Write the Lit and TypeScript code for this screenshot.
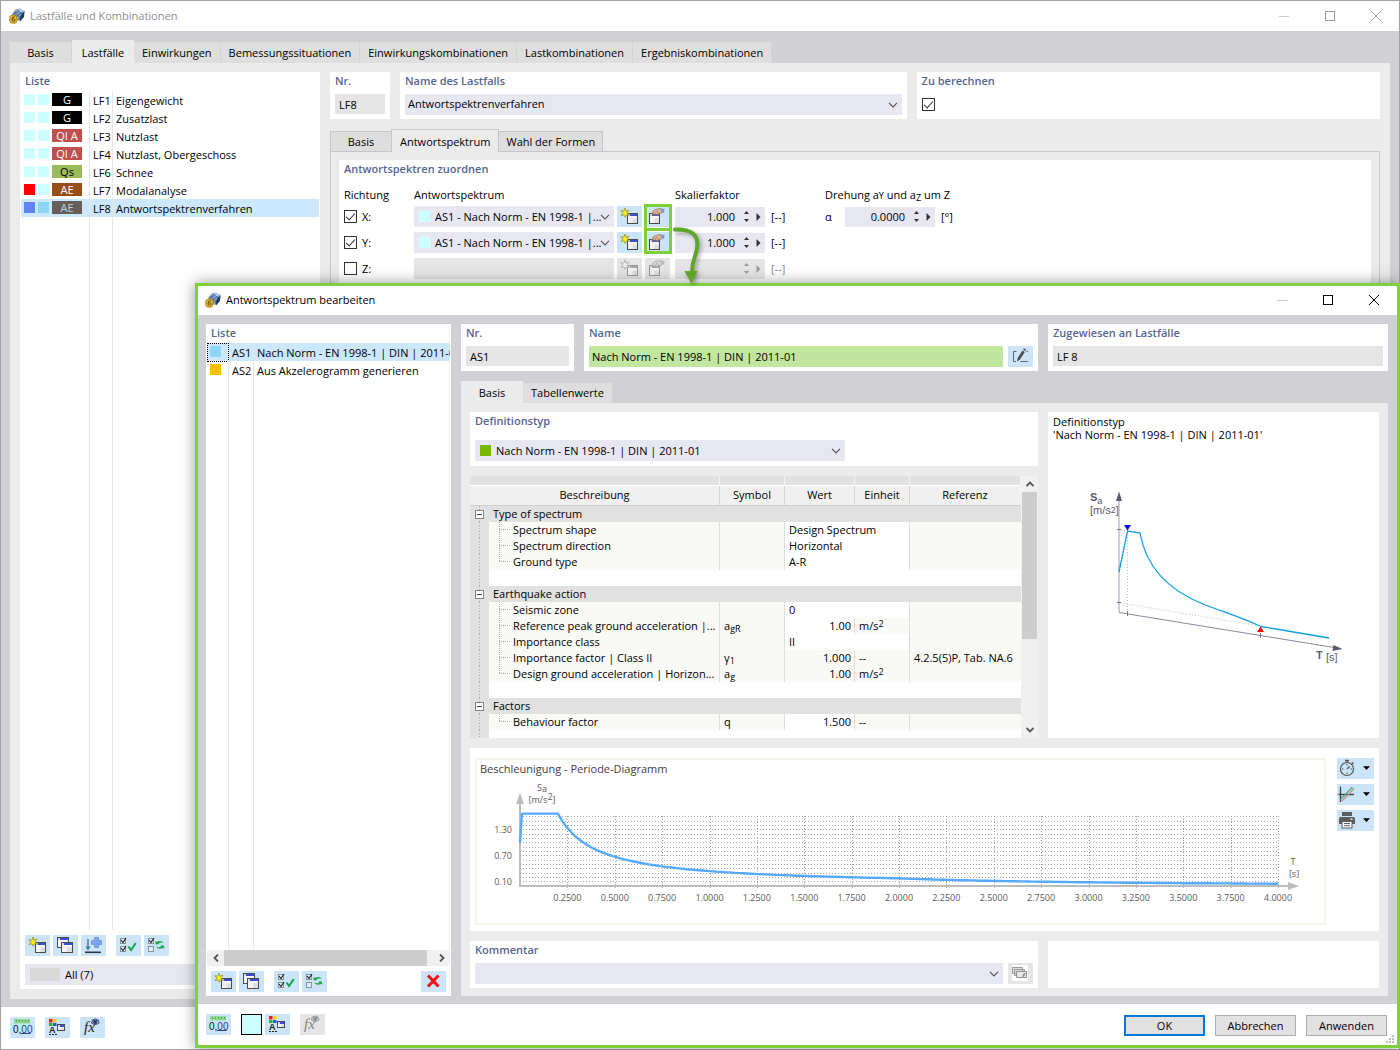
import { LitElement, html, css, svg, nothing, TemplateResult } from "lit";
import { customElement, property } from "lit/decorators.js";
import { classMap } from "lit/directives/class-map.js";

/* ---------- toolbar glyphs, drawn on a 25 x 21 button face ---------- */

const miniWindow = (x: number, y: number, w: number, h: number, bar = "#3a4fd8", frame = "#4a4a4a") => svg`
  <rect x=${x + 0.5} y=${y + 0.5} width=${w - 1} height=${h - 1} fill="#f3f3f3" stroke=${frame}></rect>
  <rect x=${x + 1} y=${y + 1} width=${w - 2} height="2" fill=${bar}></rect>
  <rect x=${x + 1} y=${y + 1} width="2" height="2" fill="#d8d8d8"></rect>
  <rect x=${x + w / 2} y=${y + h / 2} width=${w / 2 - 1} height=${h / 2 - 1} fill="#dedede"></rect>`;

const star = (fill: string, stroke: string) => svg`
  <path d="M8 2 L9 5.2 L12 4.2 L10 6.7 L12.4 9 L9.4 8.6 L8.2 11.4 L7 8.8 L4 9.6 L6 7 L3.6 4.8 L6.8 5.2 Z"
    fill=${fill} stroke=${stroke} stroke-width="0.7"></path>`;

const tick = (y: number) => svg`
  <rect x="4.5" y=${y + 0.5} width="5" height="5" fill="#e6eef5" stroke="#8a949c"></rect>
  <path d=${`M5 ${y + 2} L7 ${y + 4.5} L10 ${y}`} fill="none" stroke="#222" stroke-width="1.2"></path>`;

const eye = (dark: string, light: string) => svg`
  <path d="M11 5.5 Q15 1 19.5 5.5 Q15 9.5 11 5.5 Z" fill=${light} stroke=${dark} stroke-width="0.9"></path>
  <circle cx="15.2" cy="5.3" r="1.8" fill=${dark}></circle>
  <path d="M11.5 3.5 Q15 0.5 19 3.5" fill="none" stroke=${dark} stroke-width="0.9"></path>`;

const hand = (skin: string, line: string, cuff: string) => svg`
  <path d="M6.5 8 L8 5 Q10 3 12.5 3 L16 2.5 L17 6.5 Q15.5 8.2 13.5 7.6 L12.5 9 L11 8 L9.5 8.6 L8.5 7.6 Z" fill=${skin} stroke=${line} stroke-width="0.6"></path>
  <path d="M9 6 L11.5 8 M11 5 L13.5 7" stroke=${line} stroke-width="0.6"></path>
  <path d="M16 2.5 L19.8 3 L19 5 L19.5 7 L16.8 6.5 Z" fill=${cuff}></path>`;

const glyphs: Record<string, TemplateResult> = {
  new: svg`${miniWindow(10, 7, 11, 11)}${star("#f7ef1e", "#8d8a2a")}`,
  newOff: svg`${miniWindow(10, 7, 11, 11, "#a9a9a9", "#979797")}${star("#ededed", "#a5a5a5")}`,
  copy: svg`${miniWindow(4, 2, 12, 11)}${miniWindow(8, 7, 12, 11)}`,
  importCase: svg`
    <path d="M13.5 2.5 h4 v3 h3 v4 h-3 v3 h-4 v-3 h-3 v-4 h3 z" fill="#7fa3ee" stroke="#6c8fd8" stroke-width="0.8"></path>
    <path d="M7 4 V13" stroke="#3f76a8" stroke-width="1.4"></path><path d="M4.5 11.5 L7 15.5 L9.5 11.5 Z" fill="#3f76a8"></path>
    <path d="M4 17.3 H20" stroke="#2e3a44" stroke-width="1.6"></path>`,
  checkAll: svg`${tick(3)}${tick(11)}
    <path d="M12.5 11.5 L15 15 L19.8 8" fill="none" stroke="#16a54b" stroke-width="2"></path>`,
  invert: svg`${tick(3)}<rect x="4.5" y="11.5" width="5" height="5" fill="#e6eef5" stroke="#8a949c"></rect>
    <path d="M11 6.5 L12 9.5 L15.5 9 L14.5 8 Q17 6.8 19.5 8 Q17.5 4.8 13 6.8 Z" fill="#16a54b"></path>
    <path d="M20.5 13.5 L19.5 10.2 L16 10.8 L17.2 11.8 Q15 13 12 11.5 Q14.5 15 18.8 13 Z" fill="#16a54b"></path>`,
  remove: svg`<path d="M7 4.5 L17.5 15.5 M17.5 4.5 L7 15.5" stroke="#fb0d0d" stroke-width="3"></path>`,
  units: svg`<rect x="4" y="2" width="16" height="4.5" fill="#8fd98f"></rect>
    <path d="M6.5 3v2 M9.5 3v2 M12.5 3v2 M15.5 3v2 M18.5 3v2" stroke="#58a566"></path>
    <text x="3" y="15.5" class="digits" fill="#111">0,<tspan fill="#26428b">00</tspan></text>
    <path d="M11 16.5 H20.5" stroke="#26428b"></path>`,
  display: svg`<rect x="4" y="2" width="3.5" height="3.5" fill="#ee1c1c"></rect><rect x="8" y="2" width="3.5" height="3.5" fill="#f3d516"></rect>
    <rect x="4" y="6" width="3.5" height="3" fill="#35b335"></rect><rect x="8" y="6" width="3.5" height="3" fill="#2f55e6"></rect>
    <text x="4" y="16" class="letter" fill="#222">A</text>
    <path d="M4 17.5 H12" stroke="#222" stroke-dasharray="2 1"></path>
    ${miniWindow(12, 7, 8, 7)}`,
  formula: svg`<text x="4" y="14.5" class="fx" fill="#222">fx</text>${eye("#2b3766", "#aab4d8")}`,
  formulaOff: svg`<text x="4" y="14.5" class="fx" fill="#858585">fx</text>${eye("#8c8c8c", "#d5d5d5")}`,
  edit: svg`<path d="M8.5 5.5 H5.5 V15.5 H8 M12.5 15.5 H20 M18.5 5.5 H20" fill="none" stroke="#5c6a74"></path>
    <path d="M9 15.5 L9.7 12 L14.5 4.5 L16.8 6 L12 13.6 Z" fill="#4d4d4d"></path>
    <path d="M15.2 3.5 L16 2.3 L18.2 3.7 L17.4 5 Z" fill="#4d4d4d"></path>`,
  pick: svg`${miniWindow(4, 7, 11, 11, "#5b5fb0")}${hand("#dcb594", "#8d6a4e", "#6c9cd0")}`,
  pickOff: svg`${miniWindow(4, 7, 11, 11, "#a9a9a9", "#979797")}${hand("#d4d4d4", "#9a9a9a", "#bdbdbd")}`,
  stack: svg`<rect x="4" y="2" width="16" height="16" fill="#fff"></rect>
    <path d="M4.5 4.5 h10 v6 h-10 z M6.5 6.5 h10 v6 h-10 z" fill="#dcdcdc" stroke="#9a9a9a"></path>
    <path d="M8.5 8.5 h10 v6 h-10 z" fill="#e8e8e8" stroke="#909090"></path>
    <path d="M14 13.5 L16 9.5 L18 11 L15.5 14 Z" fill="#9c9c9c"></path>`,
  stopwatch: svg`<circle cx="10" cy="11" r="6.5" fill="none" stroke="#555" stroke-width="1.2"></circle>
    <path d="M10 2 V4.5 M8 2.5 H12 M15 4.5 L16.5 6 M10 11 L12.5 8.5" stroke="#555" stroke-width="1.4"></path>
    <path d="M10 6v1.5 M10 14.5v1.5 M5 11h1.5 M13.5 11h1.5" stroke="#555"></path>`,
  axes: svg`<path d="M3.5 2.5 V18 M1.5 10.5 H17" stroke="#444" stroke-width="1.3"></path>
    <path d="M4 15 L15.5 3" stroke="#3fae86" stroke-width="1.2"></path><path d="M5 17 L17 4.5" stroke="#c98d84" stroke-width="1.2"></path>`,
  printer: svg`<rect x="5" y="2" width="10" height="4" fill="#5d5d5d"></rect>
    <path d="M3.5 7 h13 q1.5 0 1.5 1.5 v5.5 h-16 v-5.5 q0 -1.5 1.5 -1.5 z" fill="#5d5d5d"></path>
    <rect x="13.5" y="8.5" width="2" height="1.3" fill="#fff"></rect>
    <rect x="5" y="11.5" width="10" height="6.5" fill="#fff" stroke="#5d5d5d"></rect>
    <path d="M7 13.5 H13 M7 15.7 H13" stroke="#5d5d5d"></path>`,
};

@customElement("tool-button")
class ToolButton extends LitElement {
  @property() glyph = "";
  @property() label = "";
  @property({ type: Boolean }) disabled = false;
  @property({ type: Boolean }) menu = false;

  static styles = css`
    :host { display: block; flex: none; }
    button { display: flex; align-items: center; border: 0; padding: 0; height: 21px; background: #cbe4f7; }
    button:disabled { background: #e5e5e5; }
    svg { display: block; }
    .digits { font: 10px "Liberation Sans", sans-serif; }
    .letter { font: bold 9px "Liberation Sans", sans-serif; }
    .fx { font: italic 15px "Liberation Serif", serif; }
  `;
  render() {
    return html`<button ?disabled=${this.disabled} aria-label=${this.label} title=${this.label}>
      <svg width="25" height="21" viewBox="0 0 25 21">${glyphs[this.glyph]}</svg>
      ${this.menu ? html`<svg width="12" height="21" viewBox="0 0 12 21"><path d="M1 8.2 H8 L4.5 12 Z"></path></svg>` : nothing}
    </button>`;
  }
}

/* ---------- acceleration / period diagram ---------- */

@customElement("spectrum-chart")
class SpectrumChart extends LitElement {
  static styles = css`
    :host { display: block; }
    svg { display: block; width: 100%; }
    text { font: 9px "Open Sans", "Noto Sans", sans-serif; fill: #5a5a5a; text-anchor: middle; }
    .title { font-size: 11px; fill: #404040; text-anchor: start; }
    .end { text-anchor: end; }
  `;
  render() {
    const x = (t: number) => 43 + t * 189.5;
    const y = (a: number) => 125.5 - a * 43.3;
    const top = 1.66;
    const points: string[] = [`${x(0)},83`, `${x(0.01)},${y(top)}`, `${x(0.2)},${y(top)}`];
    for (let t = 0.22; t <= 4.001; t += 0.02) {
      const a = t < 2 ? (top * 0.2) / t : (top * 0.4) / (t * t);
      points.push(`${x(t).toFixed(1)},${y(a).toFixed(1)}`);
    }
    const rows = Array.from({ length: 16 }, (_, i) => Math.round(y(0.1 * (i + 1))) + 0.5);
    const cols = Array.from({ length: 16 }, (_, i) => (i + 1) * 0.25);
    return html`<svg viewBox="0 0 847 163" role="img" aria-label="Beschleunigung - Periode-Diagramm">
      <text class="title" x="3" y="13">Beschleunigung - Periode-Diagramm</text>
      ${rows.map((r) => svg`<path d=${`M43 ${r} H801`} stroke="#a8a8a8" stroke-dasharray="1 2"></path>`)}
      ${cols.map((c) => svg`<path d=${`M${Math.round(x(c))}.5 56 V127`} stroke="#9c9c9c" stroke-dasharray="1 2"></path>
        <path d=${`M${Math.round(x(c))}.5 124 V128`} stroke="#b0b0b0"></path>
        <text x=${x(c)} y="141">${c.toFixed(4)}</text>`)}
      <path d="M43 38 V126 H812" fill="none" stroke="#bdbdbd" stroke-width="2"></path>
      <path d="M43 33 L47 44 H39 Z M822 126 L811 122 V130 Z" fill="#bdbdbd"></path>
      <polyline points=${points.join(" ")} fill="none" stroke="#55aaff" stroke-width="2.4" stroke-linejoin="round"></polyline>
      ${[0.1, 0.7, 1.3].map((v) => svg`<text class="end" x="35" y=${y(v) + 4}>${v.toFixed(2)}</text>`)}
      <text x="65" y="31">S<tspan dy="1">a</tspan></text>
      <text x="65" y="43">[m/s<tspan dy="-3">2</tspan><tspan dy="3">]</tspan></text>
      <text x="816" y="105">T</text>
      <text x="817" y="117">[s]</text>
    </svg>`;
  }
}

/* ---------- schematic of the definition type ---------- */

@customElement("spectrum-preview")
class SpectrumPreview extends LitElement {
  static styles = css`
    :host { display: block; }
    svg { display: block; width: 100%; }
    text { font: 11px "Liberation Sans", sans-serif; fill: #5c5a6e; }
    .bold { font-weight: bold; }
    .small { font-size: 9px; font-weight: 400; }
  `;
  render() {
    return html`<svg viewBox="0 -4 331 270" role="img" aria-label="Schema des Antwortspektrums">
      <path d="M71 55 V167" stroke="#cfcdd6" stroke-width="2"></path>
      <path d="M69 84.5 H73 M69 157.5 H73" stroke="#77748a"></path>
      <path d="M79.5 86 V168 M73 158 L212 181 M73 85 L80 86" fill="none" stroke="#bcbcc4" stroke-dasharray="1 2"></path>
      <path d="M71 167.5 L286 202.5" fill="none" stroke="#8d8a99"></path>
      <path d="M79.5 166 V171 M212.5 188 V193" stroke="#77748a"></path>
      <path d="M71 46.5 L74 56 H68 Z" fill="#5c5a6e"></path>
      <path d="M294.5 204 L285.5 200 L284.5 206 Z" fill="#5c5a6e"></path>
      <path d="M71 127 L79.5 86 L92 88 C98 122 120 145 155 159 C175 167 190 171 213 181.5 L281 193" fill="none" stroke="#119fe0" stroke-width="1.3"></path>
      <path d="M76 80 H83 L79.5 85.5 Z" fill="#0a0af5"></path>
      <path d="M209 187 H216 L212.5 181.5 Z" fill="#f50a0a"></path>
      <text class="bold" x="42" y="56">S<tspan dy="3" class="small">a</tspan></text>
      <text x="42" y="69">[m/s<tspan dy="-1" class="small">2</tspan><tspan dy="1">]</tspan></text>
      <text class="bold" x="268" y="214">T</text>
      <text x="278" y="216">[s]</text>
    </svg>`;
  }
}

/* ---------- data ---------- */

interface LoadCase { nr: string; name: string; tag: string; bg: string; fg: string; c1: string; c2: string; selected?: boolean }
const loadCases: LoadCase[] = [
  { nr: "LF1", name: "Eigengewicht", tag: "G", bg: "#000", fg: "#fff", c1: "#ccffff", c2: "#ccffff" },
  { nr: "LF2", name: "Zusatzlast", tag: "G", bg: "#000", fg: "#fff", c1: "#ccffff", c2: "#ccffff" },
  { nr: "LF3", name: "Nutzlast", tag: "QI A", bg: "#c0504d", fg: "#fff", c1: "#ccffff", c2: "#ccffff" },
  { nr: "LF4", name: "Nutzlast, Obergeschoss", tag: "QI A", bg: "#c0504d", fg: "#fff", c1: "#ccffff", c2: "#ccffff" },
  { nr: "LF6", name: "Schnee", tag: "Qs", bg: "#9bbb59", fg: "#000", c1: "#ccffff", c2: "#ccffff" },
  { nr: "LF7", name: "Modalanalyse", tag: "AE", bg: "#974f17", fg: "#fff", c1: "#ff0000", c2: "#ccffff" },
  { nr: "LF8", name: "Antwortspektrenverfahren", tag: "AE", bg: "#675f57", fg: "#b5d5ea", c1: "#5f85f5", c2: "#8dd6f7", selected: true },
];

interface Param { name: string; symbol?: TemplateResult; value: string; unit?: TemplateResult | string; ref?: string; editable: boolean }
interface Section { title: string; rows: Param[] }
const ms2 = html`m/s<sup>2</sup>`;
const sections: Section[] = [
  {
    title: "Type of spectrum",
    rows: [
      { name: "Spectrum shape", value: "Design Spectrum", editable: true },
      { name: "Spectrum direction", value: "Horizontal", editable: true },
      { name: "Ground type", value: "A-R", editable: true },
    ],
  },
  {
    title: "Earthquake action",
    rows: [
      { name: "Seismic zone", value: "0", editable: true },
      { name: "Reference peak ground acceleration |...", symbol: html`a<sub>gR</sub>`, value: "1.00", unit: ms2, editable: true },
      { name: "Importance class", value: "II", editable: true },
      { name: "Importance factor | Class II", symbol: html`γ<sub>1</sub>`, value: "1.000", unit: "--", ref: "4.2.5(5)P, Tab. NA.6", editable: false },
      { name: "Design ground acceleration | Horizon...", symbol: html`a<sub>g</sub>`, value: "1.00", unit: ms2, editable: false },
    ],
  },
  { title: "Factors", rows: [{ name: "Behaviour factor", symbol: html`q`, value: "1.500", unit: "--", editable: true }] },
];

const appIcon = html`<svg width="16" height="16" viewBox="0 0 16 16" aria-hidden="true">
  <path d="M3 6 L6.5 1.5 L11 0.5 L15.5 3 L15 8 L11 13 L7 12 Z" fill="#7f9cc4"></path>
  <path d="M6.5 1.5 L11 0.5 L15.5 3 L12.5 5.5 Z" fill="#b4c7e0"></path>
  <path d="M13 5.5 L15.5 3 L15 9 L11 13.5 L10.5 10 Z" fill="#2b3a55"></path>
  <path d="M5 4 L11 9.5 M8 1.5 L13 6 M4 7 L10 2.5 M7 9 L13 4" stroke="#3f5f90" stroke-width="0.8"></path>
  <rect x="0.7" y="7" width="7.3" height="8.3" rx="3" fill="#e5b62c" stroke="#a07c18" stroke-width="0.8"></rect>
  <path d="M6 8.8 Q3 8.2 3 11.5 Q3 13.5 4.6 13.5 Q6 13.3 6 12 Q5.8 10.8 4.5 10.9 Q3.5 11 3.1 11.8" fill="none" stroke="#5f4a0c" stroke-width="0.9"></path>
</svg>`;

const chevron = html`<svg class="chevron" width="10" height="6" viewBox="0 0 10 6" aria-hidden="true">
  <path d="M1 0.8 L5 4.8 L9 0.8" fill="none" stroke="#555" stroke-width="1.2"></path></svg>`;

@customElement("app-root")
class AppRoot extends LitElement {
  static styles = css`
    :host { display: block; }
    * { box-sizing: border-box; }
    .desktop, button, input, select { font: 11px/18px "Open Sans", "Noto Sans", sans-serif; color: #000; }
    .desktop { position: relative; height: 100vh; min-height: 900px; overflow: hidden; }
    button, input, select { margin: 0; border: 0; border-radius: 0; }

    .window { display: flex; flex-direction: column; height: 100%; background: #fff; border: 1px solid #a3a3a3; }
    .dialog { position: absolute; inset: 283px 0 2px 195px; height: auto; border: 3px solid #7fd13b; box-shadow: 0 0 14px rgba(0, 0, 0, 0.4); }
    .titlebar { display: flex; align-items: center; flex: none; height: 30px; padding-left: 8px; gap: 5px; color: #8f8f8f; }
    .dialog .titlebar { height: 29px; padding: 0 0 2px 7px; color: #000; }
    .titlebar h1 { flex: 1; margin: 0; font-size: 11px; font-weight: 400; }
    .window-buttons { display: flex; }
    .window-button { width: 46px; height: 27px; padding: 0; background: none; color: #999; display: grid; place-items: center; }
    .dialog .window-button { color: #000; }
    .window-button:disabled, .dialog .window-button:disabled { color: #ccc; }
    .body { flex: 1; min-height: 0; display: flex; flex-direction: column; background: #d1d0d5; padding: 9px 9px 8px; }
    .dialog .body { flex-direction: row; gap: 10px; padding-left: 8px; }
    .footer { display: flex; flex: none; height: 42px; padding: 10px 9px; gap: 10px; }
    .dialog .footer { height: 41px; padding: 10px 10px 0 8px; position: relative; }

    .tabs { display: flex; align-items: flex-end; flex: none; height: 23px; }
    .tab { height: 21px; padding: 0 8px; background: #dedede; border-right: 1px solid #d3d3d6; }
    .tab.wide { min-width: 62px; }
    .tab.active { height: 23px; padding-top: 2px; background: #ebebeb; border: 0; }
    .tabs.low { height: 22px; margin-top: 10px; }
    .tabs.low .tab { height: 20px; }
    .tabs.low .tab.active { height: 22px; }
    .tabs.boxed .tab { padding: 0 7px; border: 1px solid #c6c5ce; border-bottom: 0; margin-right: -1px; }
    .tabs.boxed .tab.active { height: 23px; padding: 1px 8px 0; margin-bottom: -1px; position: relative; }

    .page { flex: 1; min-height: 0; display: flex; gap: 10px; padding: 9px 10px 10px; background: #ebebeb; }
    .page.boxed { border: 1px solid #c6c5ce; padding: 8px; }
    .page.stack { flex-direction: column; padding: 9px 9px 8px; }
    .column { flex: 1; min-width: 0; display: flex; flex-direction: column; }
    .row { display: flex; gap: 10px; flex: none; }

    .group { background: #fff; padding: 0 5px 4px; min-width: 0; }
    .group h2, .group .caption { display: block; margin: 0 0 4px; font-size: 11px; line-height: 18px; font-weight: 600; color: #566690; }
    .fields { display: flex; gap: 5px; }
    .nr { flex: 0 0 60px; }
    .dialog .nr { flex-basis: 113px; }
    .name { flex: 507 1 0; }
    .calc { flex: 463 1 0; }
    .dialog .name { flex: 1; }
    .side { flex: 0 0 331px; }
    .side.outer { flex-basis: 340px; }
    .grow { flex: 1; }
    .calc-field { padding-top: 4px; }

    .text { display: block; width: 100%; min-width: 0; height: 20px; padding: 0 4px; background: #e5e5e5; }
    .text.marked { height: 21px; padding: 0 3px; background: #c1e6a0; }
    .combo { display: grid; grid-template-columns: 1fr 18px; align-items: center; flex: 1; min-width: 0; height: 21px; background: #e7e7f2; }
    .combo select { grid-area: 1 / 1 / 2 / 3; width: 100%; height: 21px; padding: 0 3px 1px; appearance: none; background: none; outline: 0; }
    .combo .chevron { grid-area: 1 / 2; justify-self: center; pointer-events: none; }
    .combo.swatched { grid-template-columns: 21px 1fr 18px; }
    .combo.swatched select { grid-area: 1 / 2 / 2 / 4; padding: 0; }
    .combo.swatched .chevron { grid-area: 1 / 3; }
    .combo .swatch { margin-left: 5px; }
    .combo.off { background: #e5e5e5; }
    .combo.filter { grid-template-columns: 40px 1fr 18px; flex: none; }
    .combo .filter-mark { width: 30px; height: 13px; background: #d9d9d9; }
    .check { appearance: none; width: 13px; height: 13px; border: 1px solid #333; background: #fff; display: grid; place-items: center; flex: none; }
    .check:checked::after { content: ""; width: 4px; height: 8px; border: solid #333; border-width: 0 1px 1px 0; transform: rotate(42deg); margin-top: -3px; }
    .swatch { width: 11px; height: 11px; flex: none; display: block; }

    .group.list-group { flex: 0 0 300px; display: flex; flex-direction: column; padding: 0; }
    .dialog .group.list-group { flex-basis: 245px; padding-bottom: 4px; }
    .group.list-group h2 { margin: 0; padding: 0 5px 1px; }
    .list { flex: 1; min-height: 0; margin: 0 1px; display: flex; flex-direction: column; overflow: hidden; }
    .list-row { display: grid; grid-template-columns: 69px 23px 1fr; flex: none; height: 18px; white-space: nowrap; }
    .list-row > * { border-right: 1px solid #e6e6e6; padding-left: 3px; line-height: 19px; overflow: hidden; }
    .list-row > :last-child { border: 0; }
    .list-row .marks { display: flex; gap: 3px; padding: 2px 0 0 3px; }
    .list-row .marks .swatch { margin-top: 1px; }
    .list-row .number { overflow: visible; }
    .list-row.selected { background: #cce8ff; }
    .list-row.rest { flex: 1; }
    .dialog .list-row { grid-template-columns: 22px 25px 1fr; }
    .dialog .list-row .marks { padding: 0 0 0 3px; }
    .dialog .list-row.selected .marks { outline: 1px dotted #000; outline-offset: -1px; }
    .dialog .list-row .marks .swatch { margin-top: 3px; }
    .tag { width: 30px; height: 13px; line-height: 13px; text-align: center; }
    .tools { display: flex; gap: 3px; flex: none; padding: 5px 5px 0; }
    .tools .spacer { width: 4px; }
    .tools .push { margin-left: auto; }
    .list-foot { padding: 8px 5px 4px; display: grid; }

    .hscroll { display: flex; flex: none; height: 16px; margin: 1px 1px 0; background: #f0f0f0; align-items: center; }
    .arrow { width: 17px; height: 16px; padding: 0; background: none; display: grid; place-items: center; flex: none; }
    .hscroll .track { flex: 1; display: flex; height: 16px; }
    .hscroll .thumb { flex: 0 0 97%; background: #cdcdcd; }
    .vscroll { display: flex; flex-direction: column; flex: 0 0 17px; background: #f0f0f0; align-items: center; }
    .vscroll .track { flex: 1; width: 15px; display: flex; flex-direction: column; }
    .vscroll .thumb { flex: 0 0 64%; background: #cdcdcd; }

    .assign-head { padding-top: 2px; }
    .assign-rows { display: grid; gap: 5px; margin-top: 1px; }
    .assign-row { display: grid; grid-template-columns: 70px 203px 58px 90px 60px 20px 90px 30px; align-items: center; height: 21px; white-space: nowrap; }
    .assign-row .combo { margin-right: 3px; }
    .pair { display: flex; gap: 3px; }
    .span2 { grid-column: span 2; }
    .span3 { grid-column: span 3; }
    .direction { display: flex; align-items: center; gap: 5px; }
    .spin { display: grid; grid-template-columns: 1fr 15px 15px; align-items: center; height: 20px; background: #e7e7f2; }
    .spin input { width: 100%; min-width: 0; height: 20px; padding: 0; background: none; text-align: right; }
    .spin svg { justify-self: end; }
    .spin .more { justify-self: center; }
    .spin.off { background: #e5e5e5; }
    .unit { padding-left: 6px; }
    .dim { color: #8a8a8a; }
    sub, sup, small { font-size: 9px; line-height: 0; }
    sub { vertical-align: -2px; }
    sup { vertical-align: 3px; }

    .highlight { position: absolute; left: 644px; top: 204px; width: 28px; height: 50px; border: 3px solid #7fd13b; display: grid; }
    .highlight::after { content: ""; height: 3px; align-self: center; background: #7fd13b; }
    .pointer { position: absolute; left: 670px; top: 222px; filter: drop-shadow(2px 2px 2px rgba(0, 0, 0, 0.35)); }

    .definition { height: 54px; flex: none; }
    .definition .combo { width: 370px; margin-top: 10px; }
    .top { flex: 1; min-height: 0; display: flex; gap: 10px; }
    .left { flex: 1; min-width: 0; display: flex; flex-direction: column; gap: 10px; }
    .sheet { flex: 1; min-height: 0; display: flex; overflow: hidden; }
    .sheet-view { flex: 1; background: #fff; overflow: hidden; }
    table { width: 100%; border-collapse: separate; border-spacing: 0; table-layout: fixed; }
    .c-gutter { width: 19px; }
    .c-symbol { width: 65px; }
    .c-value { width: 70px; }
    .c-unit { width: 55px; }
    .c-ref { width: 111px; }
    th, td { height: 16px; padding: 0; line-height: 16px; font-weight: 400; text-align: left; white-space: nowrap; }
    .strip td { height: 10px; background: #e1e1e1; border-right: 1px solid #f4f4f4; border-bottom: 1px solid #fff; }
    .headrow th { height: 20px; line-height: 18px; padding-bottom: 1px; background: #f0f0f0; border-right: 1px solid #d5d5d5; border-bottom: 1px solid #d0d0d0; text-align: center; }
    .headrow th:last-child, .strip td:last-child { border-right-color: #f0f0f0; }
    .section td { background: #e1e1e1; }
    .gutter { background: #e1e1e1; }
    .gutter div { width: 19px; height: 16px; display: grid; place-items: center; background: repeating-linear-gradient(#aaa 0 1px, transparent 1px 3px) 9px 0 / 1px 100% no-repeat; }
    .expander { width: 9px; height: 9px; border: 1px solid #848484; background: #fff; padding: 0; display: grid; place-items: center; }
    .expander::after { content: ""; width: 5px; height: 1px; background: #444; }
    .section .section-title { padding-left: 4px; }
    .param td { background: #f9faf5; border-right: 1px solid #dedede; padding-left: 4px; overflow: hidden; }
    .param td.gutter { background: #e1e1e1; border: 0; padding: 0; }
    .param td.description { padding-left: 10px; }
    .param td:last-child { border-right-color: #f9faf5; }
    .param td.editable { background: #fff; }
    .param td.number { text-align: right; padding-right: 3px; }
    .description div { display: flex; gap: 2px; }
    .branch { flex: none; width: 12px; height: 16px; background:
      repeating-linear-gradient(#aaa 0 1px, transparent 1px 2px) 0 0 / 1px 100% no-repeat,
      repeating-linear-gradient(90deg, #aaa 0 1px, transparent 1px 2px) 0 7px / 12px 1px no-repeat; }
    .branch.last { background:
      repeating-linear-gradient(#aaa 0 1px, transparent 1px 2px) 0 0 / 1px 8px no-repeat,
      repeating-linear-gradient(90deg, #aaa 0 1px, transparent 1px 2px) 0 7px / 12px 1px no-repeat; }

    .preview p { margin: 3px 0 0; line-height: 13px; }
    .preview spectrum-preview { margin: 0 -5px; }
    .group.diagram { flex: none; display: flex; gap: 11px; padding: 10px 5px 6px; }
    .diagram spectrum-chart { flex: 1; border: 2px solid #f6f5ec; }
    .diagram-tools { display: grid; gap: 5px; align-content: start; }

    .color { width: 21px; height: 21px; padding: 0; background: #ccffff; border: 1px solid #000; }
    .tight { display: flex; gap: 3px; }
    .actions { margin-left: auto; display: flex; gap: 10px; padding-top: 1px; }
    .push-button { width: 81px; height: 21px; padding: 0; background: #e1e1e1; border: 1px solid #adadad; }
    .push-button.primary { border: 2px solid #0078d7; line-height: 16px; }
    .grip { position: absolute; right: 2px; bottom: 1px; }
  `;

  private titlebar(text: string) {
    return html`<header class="titlebar">
      ${appIcon}<h1>${text}</h1>
      <div class="window-buttons">
        <button class="window-button" disabled aria-label="Minimieren"><svg width="10" height="10"><path d="M0 5.5 H10" stroke="currentColor"></path></svg></button>
        <button class="window-button" aria-label="Maximieren"><svg width="10" height="10"><rect x="0.5" y="0.5" width="9" height="9" fill="none" stroke="currentColor"></rect></svg></button>
        <button class="window-button" aria-label="Schließen"><svg width="10" height="10"><path d="M0 0 L10 10 M10 0 L0 10" stroke="currentColor"></path></svg></button>
      </div>
    </header>`;
  }

  private tab(text: string, active = false, wide = false) {
    return html`<button role="tab" aria-selected=${active} class=${classMap({ tab: true, active, wide })}>${text}</button>`;
  }

  private combo(label: string, value: string, swatch?: string, disabled = false) {
    return html`<div class=${classMap({ combo: true, swatched: !!swatch, off: disabled })}>
      ${swatch ? html`<span class="swatch" style="background:${swatch}"></span>` : nothing}
      <select aria-label=${label} ?disabled=${disabled}><option>${value}</option></select>
      ${disabled ? nothing : chevron}
    </div>`;
  }

  private spin(label: string, value: string, disabled = false) {
    const c = disabled ? "#999" : "#333";
    return html`<div class=${classMap({ spin: true, off: disabled })}>
      <input aria-label=${label} .value=${value} ?disabled=${disabled} />
      <svg width="7" height="13" viewBox="0 0 7 13" fill=${c}><path d="M3.5 1 L6 4 H1 Z M3.5 12 L6 9 H1 Z"></path></svg>
      <svg class="more" width="7" height="8" viewBox="0 0 7 8" fill=${c}><path d="M2.5 0 L6.5 4 L2.5 8 Z"></path></svg>
    </div>`;
  }

  private direction(axis: string, on: boolean) {
    return html`
      <label class="direction"><input class="check" type="checkbox" .checked=${on} />${axis}:</label>
      ${this.combo("Antwortspektrum " + axis, on ? "AS1 - Nach Norm - EN 1998-1 |..." : "", on ? "#ccffff" : undefined, !on)}
      <div class="pair">
        <tool-button glyph=${on ? "new" : "newOff"} label="Neues Antwortspektrum" ?disabled=${!on}></tool-button>
        <tool-button glyph=${on ? "pick" : "pickOff"} label="Antwortspektrum bearbeiten" ?disabled=${!on}></tool-button>
      </div>
      ${this.spin("Skalierfaktor " + axis, on ? "1.000" : "", !on)}
      <span class=${classMap({ unit: true, dim: !on })}>[--]</span>`;
  }

  private param(p: Param, last: boolean) {
    const tone = { editable: p.editable };
    return html`<tr class="param">
      <td class="gutter"><div></div></td>
      <td class="description"><div><span class=${classMap({ branch: true, last })}></span>${p.name}</div></td>
      <td>${p.symbol ?? nothing}</td>
      ${p.unit
        ? html`<td class=${classMap({ number: true, ...tone })}>${p.value}</td><td>${p.unit}</td>`
        : html`<td colspan="2" class=${classMap(tone)}>${p.value}</td>`}
      <td>${p.ref ?? nothing}</td>
    </tr>`;
  }

  private arrow(label: string, d: string) {
    return html`<button class="arrow" aria-label=${label}><svg width="8" height="8" viewBox="0 0 8 8"><path d=${d} fill="none" stroke="#555" stroke-width="1.8"></path></svg></button>`;
  }

  private mainWindow() {
    return html`<main class="window">
      ${this.titlebar("Lastfälle und Kombinationen")}
      <div class="body">
        <nav class="tabs" role="tablist">
          ${this.tab("Basis", false, true)}${this.tab("Lastfälle", true, true)}${this.tab("Einwirkungen")}${this.tab("Bemessungssituationen")}
          ${this.tab("Einwirkungskombinationen")}${this.tab("Lastkombinationen")}${this.tab("Ergebniskombinationen")}
        </nav>
        <div class="page">
          <section class="group list-group">
            <h2>Liste</h2>
            <div class="list">
              ${loadCases.map((l) => html`<div class=${classMap({ "list-row": true, selected: !!l.selected })}>
                <span class="marks">
                  <i class="swatch" style="background:${l.c1}"></i><i class="swatch" style="background:${l.c2}"></i>
                  <span class="tag" style="background:${l.bg};color:${l.fg}">${l.tag}</span>
                </span>
                <span class="number">${l.nr}</span><span>${l.name}</span>
              </div>`)}
              <div class="list-row rest"><span></span><span></span><span></span></div>
            </div>
            <div class="tools">
              <tool-button glyph="new" label="Neu"></tool-button>
              <tool-button glyph="copy" label="Kopieren"></tool-button>
              <tool-button glyph="importCase" label="Importieren"></tool-button>
              <span class="spacer"></span>
              <tool-button glyph="checkAll" label="Alle wählen"></tool-button>
              <tool-button glyph="invert" label="Auswahl umkehren"></tool-button>
            </div>
            <div class="list-foot">
              <div class="combo swatched filter">
                <span class="swatch filter-mark"></span>
                <select aria-label="Filter"><option>All (7)</option></select>
                ${chevron}
              </div>
            </div>
          </section>
          <div class="column">
            <div class="row">
              <section class="group nr"><label class="caption" for="lf-nr">Nr.</label><input id="lf-nr" class="text" value="LF8" readonly /></section>
              <section class="group name"><h2>Name des Lastfalls</h2><div class="fields">${this.combo("Name des Lastfalls", "Antwortspektrenverfahren")}</div></section>
              <section class="group calc"><label class="caption" for="calc">Zu berechnen</label><div class="fields calc-field"><input id="calc" class="check" type="checkbox" checked /></div></section>
            </div>
            <nav class="tabs low boxed" role="tablist">${this.tab("Basis", false, true)}${this.tab("Antwortspektrum", true)}${this.tab("Wahl der Formen")}</nav>
            <div class="page boxed">
              <section class="group grow">
                <h2>Antwortspektren zuordnen</h2>
                <div class="assign-head">
                  <div class="assign-row">
                    <span>Richtung</span><span class="span2">Antwortspektrum</span>
                    <span class="span2">Skalierfaktor</span>
                    <span class="span3">Drehung a<small>Y</small> und a<sub>Z</sub> um Z</span>
                  </div>
                </div>
                <div class="assign-rows">
                  <div class="assign-row">${this.direction("X", true)}<span>α</span>${this.spin("Drehwinkel", "0.0000")}<span class="unit">[°]</span></div>
                  <div class="assign-row">${this.direction("Y", true)}</div>
                  <div class="assign-row">${this.direction("Z", false)}</div>
                </div>
              </section>
            </div>
          </div>
        </div>
      </div>
      <footer class="footer">
        <tool-button glyph="units" label="Einheiten"></tool-button>
        <tool-button glyph="display" label="Anzeige"></tool-button>
        <tool-button glyph="formula" label="Formel"></tool-button>
      </footer>
    </main>`;
  }

  private dialog() {
    return html`<section class="window dialog" role="dialog" aria-label="Antwortspektrum bearbeiten">
      ${this.titlebar("Antwortspektrum bearbeiten")}
      <div class="body">
        <section class="group list-group">
          <h2>Liste</h2>
          <div class="list">
            <div class="list-row selected"><span class="marks"><i class="swatch" style="background:#8dd6f7"></i></span><span class="number">AS1</span><span>Nach Norm - EN 1998-1 | DIN | 2011-01</span></div>
            <div class="list-row"><span class="marks"><i class="swatch" style="background:#f7c100"></i></span><span class="number">AS2</span><span>Aus Akzelerogramm generieren</span></div>
            <div class="list-row rest"><span></span><span></span><span></span></div>
          </div>
          <div class="hscroll">${this.arrow("Nach links", "M6 0.5 L2.5 4 L6 7.5")}<div class="track"><div class="thumb"></div></div>${this.arrow("Nach rechts", "M2 0.5 L5.5 4 L2 7.5")}</div>
          <div class="tools">
            <tool-button glyph="new" label="Neu"></tool-button>
            <tool-button glyph="copy" label="Kopieren"></tool-button>
            <span class="spacer"></span>
            <tool-button glyph="checkAll" label="Alle wählen"></tool-button>
            <tool-button glyph="invert" label="Auswahl umkehren"></tool-button>
            <tool-button class="push" glyph="remove" label="Löschen"></tool-button>
          </div>
        </section>
        <div class="column">
          <div class="row">
            <section class="group nr"><label class="caption" for="as-nr">Nr.</label><input id="as-nr" class="text" value="AS1" readonly /></section>
            <section class="group name"><label class="caption" for="as-name">Name</label>
              <div class="fields"><input id="as-name" class="text marked" value="Nach Norm - EN 1998-1 | DIN | 2011-01" /><tool-button glyph="edit" label="Name bearbeiten"></tool-button></div>
            </section>
            <section class="group side outer"><label class="caption" for="as-lf">Zugewiesen an Lastfälle</label><input id="as-lf" class="text" value="LF 8" readonly /></section>
          </div>
          <nav class="tabs low" role="tablist">${this.tab("Basis", true, true)}${this.tab("Tabellenwerte")}</nav>
          <div class="page stack">
            <div class="top">
              <div class="left">
                <section class="group definition"><h2>Definitionstyp</h2>${this.combo("Definitionstyp", "Nach Norm - EN 1998-1 | DIN | 2011-01", "#7ab800")}</section>
                <div class="sheet">
                  <div class="sheet-view">
                    <table>
                      <colgroup><col class="c-gutter" /><col /><col class="c-symbol" /><col class="c-value" /><col class="c-unit" /><col class="c-ref" /></colgroup>
                      <thead>
                        <tr class="strip"><td colspan="2"></td><td></td><td></td><td></td><td></td></tr>
                        <tr class="headrow"><th colspan="2">Beschreibung</th><th>Symbol</th><th>Wert</th><th>Einheit</th><th>Referenz</th></tr>
                      </thead>
                      <tbody>
                        ${sections.map((s) => html`
                          <tr class="section"><td class="gutter"><div><button class="expander" aria-label=${s.title}></button></div></td><td class="section-title" colspan="5">${s.title}</td></tr>
                          ${s.rows.map((p, i) => this.param(p, i === s.rows.length - 1))}
                          <tr><td class="gutter"><div></div></td><td colspan="5"></td></tr>`)}
                      </tbody>
                    </table>
                  </div>
                  <div class="vscroll">${this.arrow("Nach oben", "M0.5 6 L4 2.5 L7.5 6")}<div class="track"><div class="thumb"></div></div>${this.arrow("Nach unten", "M0.5 2 L4 5.5 L7.5 2")}</div>
                </div>
              </div>
              <section class="group side preview">
                <p>Definitionstyp<br />'Nach Norm - EN 1998-1 | DIN | 2011-01'</p>
                <spectrum-preview></spectrum-preview>
              </section>
            </div>
            <section class="group diagram">
              <spectrum-chart></spectrum-chart>
              <div class="diagram-tools">
                <tool-button menu glyph="stopwatch" label="Zeitachse"></tool-button>
                <tool-button menu glyph="axes" label="Achsen"></tool-button>
                <tool-button menu glyph="printer" label="Drucken"></tool-button>
              </div>
            </section>
            <div class="row">
              <section class="group grow"><h2>Kommentar</h2><div class="fields">${this.combo("Kommentar", "")}<tool-button glyph="stack" label="Kommentare" disabled></tool-button></div></section>
              <section class="group side"></section>
            </div>
          </div>
        </div>
      </div>
      <footer class="footer">
        <tool-button glyph="units" label="Einheiten"></tool-button>
        <div class="tight"><button class="color" aria-label="Farbe"></button><tool-button glyph="display" label="Anzeige"></tool-button></div>
        <tool-button glyph="formulaOff" label="Formel" disabled></tool-button>
        <div class="actions">
          <button class="push-button primary">OK</button><button class="push-button">Abbrechen</button><button class="push-button">Anwenden</button>
        </div>
        <svg class="grip" width="9" height="9" fill="#bdbdbd" aria-hidden="true"><path d="M6 0h2v2h-2z M3 3h2v2h-2z M6 3h2v2h-2z M0 6h2v2h-2z M3 6h2v2h-2z M6 6h2v2h-2z"></path></svg>
      </footer>
    </section>`;
  }

  render() {
    return html`<div class="desktop">
      ${this.mainWindow()}
      <div class="highlight"></div>
      ${this.dialog()}
      <svg class="pointer" width="40" height="64" viewBox="0 0 40 64" aria-hidden="true">
        <path d="M5 7.5 C22 7 29 13 27 26 C26 35 22 38 22 50" fill="none" stroke="#5fa52a" stroke-width="4" stroke-linecap="round"></path>
        <path d="M14.5 49 H27.5 L21.5 62 Z" fill="#5fa52a"></path>
      </svg>
    </div>`;
  }
}
